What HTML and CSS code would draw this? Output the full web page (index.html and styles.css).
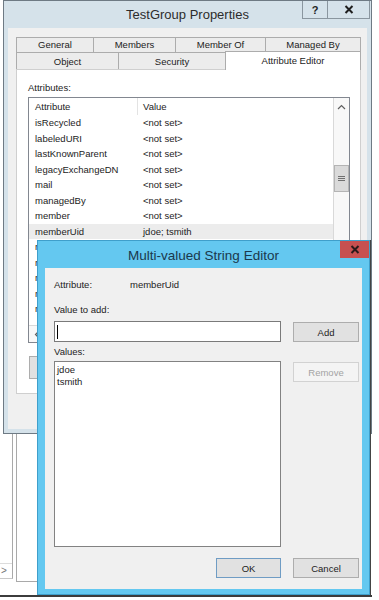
FILE: index.html
```html
<!doctype html>
<html lang="en">
<head>
	<meta charset="UTF-8">
	<title>TestGroup Properties</title>
	<link rel="stylesheet" href="styles.css">
</head>
<body>
<div class="desk">

	<div class="bgwin">
		<div class="bglist"><span class="bgarrow">&gt;</span></div>
		<div class="bgpane"></div>
	</div>

	<div class="win props">
		<div class="titlebar">
			<span></span>
			<span class="title">TestGroup Properties</span>
			<div class="caps">
				<span class="cap help">?</span>
				<span class="cap close">
					<svg width="10" height="9" viewBox="0 0 10 9"><path d="M1.5 1 L8.5 8 M8.5 1 L1.5 8" stroke="#1f1f1f" stroke-width="2"/></svg>
				</span>
			</div>
		</div>
		<div class="sheet">
			<div class="tabrow row1">
				<span class="tab t-general">General</span>
				<span class="tab t-members">Members</span>
				<span class="tab t-memberof">Member Of</span>
				<span class="tab t-managed">Managed By</span>
			</div>
			<div class="tabrow row2">
				<span class="tab t-object">Object</span>
				<span class="tab t-security">Security</span>
				<span class="tab t-attr sel">Attribute Editor</span>
			</div>
			<div class="panel">
				<div class="lbl">Attributes:</div>
				<div class="alist">
					<div class="amain">
						<div class="ahead"><span class="c1">Attribute</span><span class="c2">Value</span></div>
						<div class="arow"><span class="c1">isRecycled</span><span class="c2">&lt;not set&gt;</span></div>
						<div class="arow"><span class="c1">labeledURI</span><span class="c2">&lt;not set&gt;</span></div>
						<div class="arow"><span class="c1">lastKnownParent</span><span class="c2">&lt;not set&gt;</span></div>
						<div class="arow"><span class="c1">legacyExchangeDN</span><span class="c2">&lt;not set&gt;</span></div>
						<div class="arow"><span class="c1">mail</span><span class="c2">&lt;not set&gt;</span></div>
						<div class="arow"><span class="c1">managedBy</span><span class="c2">&lt;not set&gt;</span></div>
						<div class="arow"><span class="c1">member</span><span class="c2">&lt;not set&gt;</span></div>
						<div class="arow sel"><span class="c1">memberUid</span><span class="c2">jdoe; tsmith</span></div>
						<div class="arow"><span class="c1">msCOM-UserLink</span><span class="c2">&lt;not set&gt;</span></div>
						<div class="arow"><span class="c1">msDS-AzLDAPQuery</span><span class="c2">&lt;not set&gt;</span></div>
						<div class="arow"><span class="c1">msDS-NcType</span><span class="c2">&lt;not set&gt;</span></div>
						<div class="arow"><span class="c1">msDS-PSOApplied</span><span class="c2">&lt;not set&gt;</span></div>
						<div class="arow"><span class="c1">msSFU30Name</span><span class="c2">&lt;not set&gt;</span></div>
					</div>
					<div class="vs">
						<span class="sarrow">
							<svg width="9" height="6" viewBox="0 0 9 6"><path d="M1 5 L4.5 1.5 L8 5" fill="none" stroke="#606060" stroke-width="1.2"/></svg>
						</span>
						<span class="thumb">
							<svg width="7" height="6" viewBox="0 0 7 6"><path d="M0 0.5 H7 M0 2.5 H7 M0 4.5 H7" stroke="#707070" stroke-width="1"/></svg>
						</span>
					</div>
					<div class="hs">
						<span class="harrow">
							<svg width="6" height="9" viewBox="0 0 6 9"><path d="M5 1 L1.5 4.5 L5 8" fill="none" stroke="#606060" stroke-width="1.2"/></svg>
						</span>
					</div>
					<div class="corner"></div>
				</div>
				<div class="pbtns">
					<span class="btn pbtn">Edit</span>
					<span class="btn pbtn">Filter</span>
				</div>
			</div>
			<div class="sbtns">
				<span class="btn sbtn">OK</span>
				<span class="btn sbtn">Cancel</span>
				<span class="btn sbtn">Apply</span>
				<span class="btn sbtn">Help</span>
			</div>
		</div>
	</div>

	<div class="win dlg">
		<div class="titlebar dtitlebar">
			<span></span>
			<span class="title dtitle">Multi-valued String Editor</span>
			<div class="caps dcaps">
				<span class="dclose">
					<svg width="10" height="9" viewBox="0 0 10 9"><path d="M1.5 1 L8.5 8 M8.5 1 L1.5 8" stroke="#2a1a1a" stroke-width="2"/></svg>
				</span>
			</div>
		</div>
		<div class="dclient">
			<div class="drow attr">
				<span class="dlbl">Attribute:</span>
				<span>memberUid</span>
			</div>
			<div class="drow addlbl">Value to add:</div>
			<div class="pair addrow">
				<div class="vinput"><span class="caret"></span></div>
				<span class="btn dbtn add">Add</span>
			</div>
			<div class="drow vallbl">Values:</div>
			<div class="pair valrow">
				<div class="vlist">
					<div>jdoe</div>
					<div>tsmith</div>
				</div>
				<span class="btn dbtn off">Remove</span>
			</div>
			<div class="dfoot">
				<span class="btn dbtn ok">OK</span>
				<span class="btn dbtn">Cancel</span>
			</div>
		</div>
	</div>

</div>
</body>
</html>
```

FILE: styles.css
```css
*{
	margin:0;
	padding:0;
}
body{
	font-family: "Liberation Sans", Arial, sans-serif;
	font-size: 9.5px;
	color: #1c1c1c;
	background: #fff;
}
.desk{
	position: relative;
	width: 379px;
	height: 600px;
	overflow: hidden;
}

/* window behind everything */
.bgwin{
	position: absolute;
	left: -10px;
	top: 380px;
	width: 382px;
	height: 217px;
	box-sizing: border-box;
	background: #fff;
	border-bottom: 2px solid #3c3c3c;
	display: flex;
	align-items: flex-start;
}
.bglist{
	width: 23px;
	height: 199px;
	box-sizing: border-box;
	border-right: 1px solid #a9a9a9;
	border-bottom: 1px solid #c8c8c8;
	display: flex;
	flex-direction: column;
	justify-content: flex-end;
}
.bgarrow{
	height: 14px;
	line-height: 14px;
	padding-left: 11px;
	color: #777;
	font-size: 10px;
	border-top: 1px solid #dcdcdc;
}
.bgpane{
	margin-left: 3px;
	width: 40px;
	height: 201px;
	border-left: 1px solid #a9a9a9;
	border-bottom: 1px solid #a9a9a9;
}

/* windows */
.win{
	position: absolute;
	box-sizing: border-box;
	display: flex;
	flex-direction: column;
}
.props{
	left: 3px;
	top: 0;
	width: 369px;
	height: 434px;
	border: 1px solid #6e7a84;
	background: #d5e2ea;
	padding: 0 4px 4px;
}
.titlebar{
	display: grid;
	grid-template-columns: 1fr auto 1fr;
	align-items: start;
	height: 27px;
	flex: none;
}
.title{
	font-size: 13px;
	line-height: 27px;
	color: #2c2c2c;
	white-space: nowrap;
}
.caps{
	justify-self: end;
	display: flex;
	margin-right: -3px;
}
.cap{
	box-sizing: border-box;
	height: 18px;
	border: 1px solid #8a969f;
	border-top: none;
	display: flex;
	align-items: center;
	justify-content: center;
	font-weight: bold;
	font-size: 11px;
	color: #1f1f1f;
}
.cap.help{
	width: 26px;
}
.cap.close{
	width: 43px;
	margin-left: -1px;
}

.sheet{
	flex: 1;
	background: #f0f0f0;
	padding: 9px 6px 0 8px;
	display: flex;
	flex-direction: column;
}
.tabrow{
	display: flex;
	align-items: flex-start;
}
.tab{
	box-sizing: border-box;
	border: 1px solid #acacac;
	border-bottom: none;
	background: #ececec;
	text-align: center;
	color: #222;
	white-space: nowrap;
}
.tab + .tab{
	margin-left: -1px;
}
.row1 .tab{
	height: 15px;
	line-height: 14px;
}
.row2 .tab{
	height: 17px;
	line-height: 17px;
}
.row2 .tab.sel{
	position: relative;
	z-index: 1;
	height: 19px;
	margin-top: -1px;
	margin-bottom: -1px;
	line-height: 17px;
	background: #fff;
}
.t-general{ width: 78px; }
.t-members{ width: 83px; }
.t-memberof{ width: 91px; }
.t-managed{ width: 96px; }
.t-object{ width: 103px; }
.t-security{ width: 108px; }
.t-attr{ width: 136px; }

.panel{
	height: 325px;
	box-sizing: border-box;
	border: 1px solid #cfcfcf;
	background: #fff;
	padding: 12px 10px 0 11px;
}
.lbl{
	line-height: 12px;
}
.alist{
	margin-top: 3px;
	height: 246px;
	box-sizing: border-box;
	border: 1px solid #828790;
	display: grid;
	grid-template-columns: 1fr 16px;
	grid-template-rows: 1fr 17px;
	overflow: hidden;
}
.amain{
	overflow: hidden;
}
.ahead{
	display: flex;
	height: 17px;
	line-height: 17px;
}
.arow{
	display: flex;
	height: 15.5px;
	line-height: 15.5px;
	white-space: nowrap;
}
.arow.sel{
	background: #ececec;
}
.c1{
	width: 109px;
	flex: none;
	box-sizing: border-box;
	padding-left: 6px;
}
.ahead .c1{
	border-right: 1px solid #e3e3e3;
}
.c2{
	padding-left: 5px;
}
.vs{
	grid-row: 1;
	grid-column: 2;
	display: flex;
	flex-direction: column;
	background: #f8f8f8;
	border-left: 1px solid #d9d9d9;
}
.sarrow{
	height: 17px;
	display: flex;
	align-items: center;
	justify-content: center;
}
.thumb{
	margin-top: 50px;
	height: 27px;
	box-sizing: border-box;
	background: #dadada;
	border: 1px solid #b4b4b4;
	display: flex;
	align-items: center;
	justify-content: center;
}
.hs{
	grid-row: 2;
	grid-column: 1;
	display: flex;
	align-items: center;
	background: #f8f8f8;
	border-top: 1px solid #d9d9d9;
}
.harrow{
	width: 16px;
	display: flex;
	justify-content: center;
}
.corner{
	grid-row: 2;
	grid-column: 2;
	background: #f0f0f0;
}
.pbtns{
	display: flex;
	justify-content: space-between;
	margin: 13px 0 0 1px;
}

.btn{
	box-sizing: border-box;
	display: flex;
	align-items: center;
	justify-content: center;
	background: #e1e1e1;
	border: 1px solid #adadad;
	color: #1c1c1c;
}
.pbtn{
	width: 75px;
	height: 23px;
}
.sbtns{
	display: flex;
	justify-content: flex-end;
	gap: 6px;
	margin-top: 8px;
}
.sbtn{
	width: 75px;
	height: 23px;
}

/* Multi-valued String Editor */
.dlg{
	z-index: 2;
	left: 37px;
	top: 240px;
	width: 333px;
	height: 355px;
	background: #64c8f0;
	border: 1px solid #3f9fcb;
	padding: 0 7px 5px;
	box-shadow: 1px 0 0 #444;
}
.dtitle{
	font-size: 13.5px;
	line-height: 26px;
	padding-top: 2px;
	color: #1b394c;
}
.dcaps{
	margin-right: -7px;
}
.dclose{
	width: 29px;
	height: 17px;
	background: #c75050;
	display: flex;
	align-items: center;
	justify-content: center;
}
.dclient{
	flex: 1;
	background: #f0f0f0;
	padding: 10px 3px 0 9px;
	display: flex;
	flex-direction: column;
}
.drow{
	line-height: 14px;
	height: 14px;
	display: flex;
}
.dlbl{
	width: 76px;
}
.addlbl{
	margin-top: 11px;
}
.pair{
	display: flex;
	align-items: flex-start;
	gap: 12px;
}
.addrow{
	margin-top: 4px;
}
.vinput{
	width: 227px;
	height: 21px;
	box-sizing: border-box;
	border: 1px solid #7a7a7a;
	background: #fff;
}
.caret{
	display: block;
	width: 1px;
	height: 14px;
	margin: 3px 0 0 2px;
	background: #000;
}
.dbtn{
	width: 66px;
	height: 20px;
}
.add{
	margin-top: 1px;
}
.vallbl{
	margin-top: 3px;
}
.valrow{
	margin-top: 2px;
}
.vlist{
	width: 227px;
	height: 186px;
	box-sizing: border-box;
	border: 1px solid #828282;
	background: #fff;
	padding: 2px 0 0 2px;
	line-height: 12px;
}
.off{
	margin-top: 1px;
	background: #f4f4f4;
	border-color: #d2d2d2;
	color: #a3a3a3;
}
.dfoot{
	display: flex;
	justify-content: flex-end;
	gap: 12px;
	margin-top: 11px;
}
.ok{
	width: 65px;
	border-color: #6f9cc4;
}
```
